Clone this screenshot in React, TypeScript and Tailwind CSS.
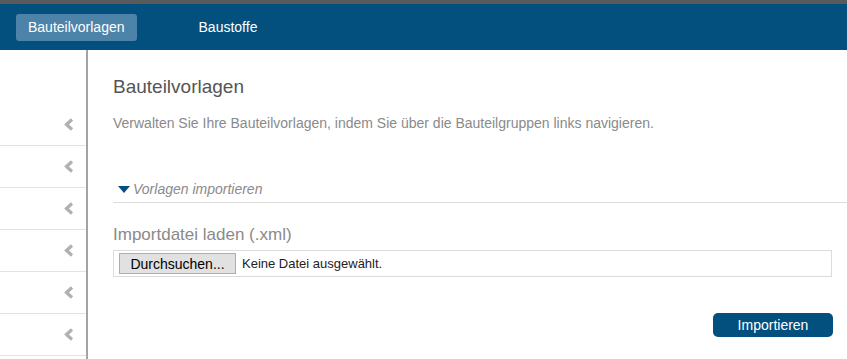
import React from 'react';

const rows = [0, 1, 2, 3, 4, 5];

function Chevron() {
  return (
    <svg width="11" height="13" viewBox="0 0 11 13" className="text-[#b0b0b0]">
      <path d="M9 1.5 L3.5 6.5 L9 11.5" fill="none" stroke="currentColor" strokeWidth="3.2" strokeLinejoin="miter" />
    </svg>
  );
}

export default function App() {
  return (
    <div className="w-[847px] h-[359px] overflow-hidden bg-white font-['Liberation_Sans',Arial,sans-serif]">
      <div className="h-1 bg-[#5a5a5a]" />
      <nav className="h-[46px] bg-[#03507f] flex items-center pl-4 gap-[50px]">
        <button className="h-[27px] px-3 rounded-[3px] bg-[#4d83a8] text-white text-[14px]">Bauteilvorlagen</button>
        <button className="h-[27px] px-3 text-white text-[14px]">Baustoffe</button>
      </nav>
      <div className="flex h-[309px]">
        <aside className="w-[88px] shrink-0 border-r-2 border-[#a3a3a3] pt-[54px]">
          {rows.map((r) => (
            <div key={r} className="h-[42px] border-b border-[#e2e2e2] flex items-center justify-end pr-[12px]">
              <Chevron />
            </div>
          ))}
        </aside>
        <main className="flex-1 pl-[25px] pt-[26px]">
          <h1 className="text-[19px] leading-[22px] text-[#555]">Bauteilvorlagen</h1>
          <p className="mt-[17px] text-[14px] leading-[16px] text-[#8a8a8a]">
            Verwalten Sie Ihre Bauteilvorlagen, indem Sie über die Bauteilgruppen links navigieren.
          </p>
          <div className="mt-[50px] flex items-center gap-[3px] pb-[5px] border-b border-[#dcdcdc] pl-[5px]">
            <svg width="12" height="7" viewBox="0 0 12 7">
              <path d="M0 0 H12 L6 7 Z" fill="#03507f" />
            </svg>
            <span className="italic text-[14px] leading-[16px] text-[#8a8a8a]">Vorlagen importieren</span>
          </div>
          <div className="mt-[23px] text-[17px] leading-[18px] text-[#8a8a8a]">Importdatei laden (.xml)</div>
          <div className="mt-[6px] mr-[15px] h-[27px] border border-[#dcdcdc] flex items-center pl-[5px] gap-[6px]">
            <button className="h-[21px] w-[117px] border border-[#adadad] bg-[#e1e1e1] text-[14px] text-black">Durchsuchen...</button>
            <span className="text-[13px] text-[#222]">Keine Datei ausgewählt.</span>
          </div>
          <div className="mt-[36px] mr-[14px] flex justify-end">
            <button className="h-[24px] w-[120px] rounded-[5px] bg-[#03507f] text-white text-[14px]">Importieren</button>
          </div>
        </main>
      </div>
    </div>
  );
}
